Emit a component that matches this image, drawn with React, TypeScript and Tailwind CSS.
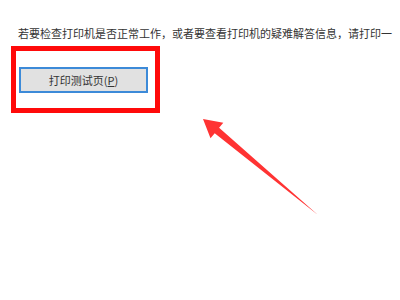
export default function App() {
  return (
    <div
      className="relative w-[400px] h-[300px] bg-white overflow-hidden"
      style={{ fontFamily: '"Noto Sans CJK SC", "Liberation Sans", sans-serif' }}
    >
      <div className="pl-[11px] pt-[26px]">
        <p className="pl-[7px] text-[11px] leading-[14px] text-[#333] whitespace-nowrap">
          若要检查打印机是否正常工作，或者要查看打印机的疑难解答信息，请打印一
        </p>
        <div className="mt-[6px] w-[149px] h-[67px] border-[5px] border-[#ff0a0a] pl-[3px] pt-[16px]">
          <button className="w-[129px] h-[26px] bg-[#e1e1e1] border-2 border-[#3c8ad8] text-[11px] text-[#333] flex items-center justify-center">
            打印测试页(<span className="underline">P</span>)
          </button>
        </div>
      </div>

      {/* 红色箭头 */}
      <svg className="absolute left-0 top-0" width="400" height="300" viewBox="0 0 400 300">
        <polygon
          points="203,119 223.3,122.8 219.1,127.8 318,215 214.7,133.2 210.5,138.2"
          fill="#ff3333"
        />
      </svg>
    </div>
  );
}
